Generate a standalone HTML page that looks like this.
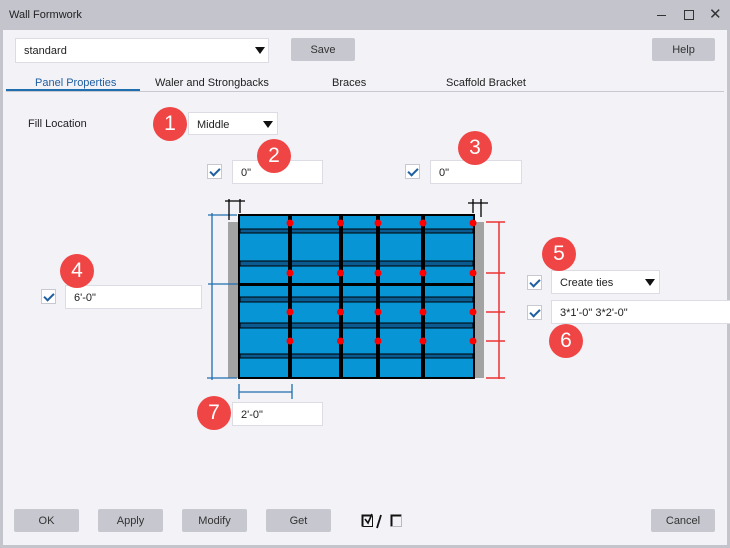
<!DOCTYPE html><html><head><style>
*{box-sizing:border-box;margin:0;padding:0}
body{width:730px;height:548px;background:#f2f2f7;font-family:"Liberation Sans",sans-serif;font-size:11px;color:#222;position:relative;overflow:hidden}
.a{position:absolute}
.inp{position:absolute;background:#fff;border:1px solid #dcdce4;height:24px;padding:6px 8px;font-size:11px}
.btn{position:absolute;background:#c6c7cf;border-radius:2px;height:23px;text-align:center;line-height:25px;font-size:11px;color:#333}
.cb{position:absolute;width:15px;height:15px;border:1px solid #c8c8d0;background:#fff}
.cb:after{content:"";position:absolute;left:4px;top:1px;width:4px;height:8px;border:solid #1f5fa0;border-width:0 2px 2px 0;transform:rotate(45deg)}
.n{position:absolute;width:34px;height:34px;border-radius:50%;background:#f04545;color:#fff;font-size:21px;text-align:center;line-height:34px}
.tab{position:absolute;top:77px;font-size:11px}
.ar{position:absolute;width:0;height:0;border-left:5px solid transparent;border-right:5px solid transparent;border-top:7px solid #111}
</style></head><body>
<div class="a" style="left:0;top:0;width:730px;height:30px;background:#c3c4cc"></div>
<div class="a" style="left:0;top:0;width:730px;height:548px;border:3px solid #c3c4cc;border-top:none"></div>
<div class="a" style="left:9px;top:9px;font-size:11px">Wall Formwork</div>
<div class="a" style="left:657px;top:15px;width:9px;height:1px;background:#333"></div>
<div class="a" style="left:684px;top:10px;width:10px;height:10px;border:1px solid #333"></div>
<div class="a" style="left:709px;top:5px;font-size:15px;color:#333">✕</div>
<div class="inp" style="left:15px;top:38px;width:254px;height:25px">standard</div>
<div class="ar" style="left:255px;top:47px"></div>
<div class="btn" style="left:291px;top:38px;width:64px">Save</div>
<div class="btn" style="left:652px;top:38px;width:63px">Help</div>
<div class="tab" style="left:35px;color:#1f5fa0">Panel Properties</div>
<div class="tab" style="left:155px">Waler and Strongbacks</div>
<div class="tab" style="left:332px">Braces</div>
<div class="tab" style="left:446px">Scaffold Bracket</div>
<div class="a" style="left:6px;top:91px;width:718px;height:1px;background:#c8c8d0"></div>
<div class="a" style="left:6px;top:89px;width:134px;height:2px;background:#1f6fb0"></div>
<div class="a" style="left:28px;top:118px">Fill Location</div>
<div class="inp" style="left:188px;top:112px;width:90px;height:23px">Middle</div>
<div class="ar" style="left:263px;top:121px"></div>
<div class="cb" style="left:207px;top:164px"></div>
<div class="inp" style="left:232px;top:160px;width:91px">0"</div>
<div class="cb" style="left:405px;top:164px"></div>
<div class="inp" style="left:430px;top:160px;width:92px">0"</div>
<div class="cb" style="left:41px;top:289px"></div>
<div class="inp" style="left:65px;top:285px;width:137px">6'-0"</div>
<div class="cb" style="left:527px;top:275px"></div>
<div class="inp" style="left:551px;top:270px;width:109px">Create ties</div>
<div class="ar" style="left:645px;top:279px"></div>
<div class="cb" style="left:527px;top:305px"></div>
<div class="inp" style="left:551px;top:300px;width:180px">3*1'-0" 3*2'-0"</div>
<div class="inp" style="left:232px;top:402px;width:91px">2'-0"</div>
<svg class="a" style="left:0;top:0" width="730" height="548">
<rect x="228" y="222" width="11" height="156" fill="#a3a3a3"/><rect x="474" y="222" width="10" height="156" fill="#a3a3a3"/>
<rect x="239" y="215" width="235" height="163" fill="#0895d6" stroke="#000" stroke-width="2"/>
<g fill="#0b5a90" stroke="#000" stroke-width="1">
<rect x="240" y="229" width="233" height="4"/><rect x="240" y="261" width="233" height="5"/><rect x="240" y="297" width="233" height="5"/><rect x="240" y="323" width="233" height="5"/><rect x="240" y="354" width="233" height="4"/></g>
<rect x="240" y="283" width="233" height="3" fill="#000"/>
<g fill="#000"><rect x="288" y="215" width="4" height="163"/><rect x="339" y="215" width="4" height="163"/><rect x="376" y="215" width="4" height="163"/><rect x="421" y="215" width="4" height="163"/></g>
<g fill="#f00">
<circle cx="290" cy="223" r="3.5"/><circle cx="340.5" cy="223" r="3.5"/><circle cx="378" cy="223" r="3.5"/><circle cx="423" cy="223" r="3.5"/><circle cx="473" cy="223" r="3.5"/>
<circle cx="290" cy="273" r="3.5"/><circle cx="340.5" cy="273" r="3.5"/><circle cx="378" cy="273" r="3.5"/><circle cx="423" cy="273" r="3.5"/><circle cx="473" cy="273" r="3.5"/>
<circle cx="290" cy="312" r="3.5"/><circle cx="340.5" cy="312" r="3.5"/><circle cx="378" cy="312" r="3.5"/><circle cx="423" cy="312" r="3.5"/><circle cx="473" cy="312" r="3.5"/>
<circle cx="290" cy="341" r="3.5"/><circle cx="340.5" cy="341" r="3.5"/><circle cx="378" cy="341" r="3.5"/><circle cx="423" cy="341" r="3.5"/><circle cx="473" cy="341" r="3.5"/>
</g>
<g stroke="#e33" stroke-width="1.5"><line x1="499" y1="222" x2="499" y2="379"/><line x1="486" y1="222" x2="505" y2="222"/><line x1="486" y1="273" x2="505" y2="273"/><line x1="486" y1="312" x2="505" y2="312"/><line x1="486" y1="341" x2="505" y2="341"/><line x1="486" y1="378" x2="505" y2="378"/></g>
<g stroke="#1f6fb0" stroke-width="1.3"><line x1="212" y1="213" x2="212" y2="380"/><line x1="208" y1="215" x2="237" y2="215"/><line x1="208" y1="284" x2="238" y2="284"/><line x1="207" y1="378" x2="237" y2="378"/><line x1="239" y1="392" x2="292" y2="392"/><line x1="239" y1="384" x2="239" y2="399"/><line x1="292" y1="384" x2="292" y2="399"/></g>
<g stroke="#000" stroke-width="1.3"><line x1="225" y1="201" x2="245" y2="201"/><line x1="229" y1="199" x2="229" y2="220"/><line x1="240" y1="199" x2="240" y2="213"/><line x1="468" y1="203" x2="488" y2="203"/><line x1="473" y1="199" x2="473" y2="213"/><line x1="481" y1="199" x2="481" y2="217"/></g>
<g fill="none" stroke="#111">
<path d="M362.5 526.5V515.5H372.5" stroke-width="2"/><path d="M362.5 526.5H372.5V515.5" stroke-width="1"/><path d="M365 519L368 523L372 514" stroke-width="1.6"/>
<path d="M381 515L377 528" stroke-width="1.8"/>
<path d="M391.5 526.5V515.5H401.5" stroke-width="2"/><path d="M391.5 526.5H401.5V515.5" stroke-width="1" stroke="#bbb"/>
</g>
</svg>
<div class="n" style="left:153px;top:107px">1</div>
<div class="n" style="left:257px;top:139px">2</div>
<div class="n" style="left:458px;top:131px">3</div>
<div class="n" style="left:60px;top:254px">4</div>
<div class="n" style="left:542px;top:237px">5</div>
<div class="n" style="left:549px;top:324px">6</div>
<div class="n" style="left:197px;top:396px">7</div>
<div class="btn" style="left:14px;top:509px;width:65px">OK</div>
<div class="btn" style="left:98px;top:509px;width:65px">Apply</div>
<div class="btn" style="left:182px;top:509px;width:65px">Modify</div>
<div class="btn" style="left:266px;top:509px;width:65px">Get</div>
<div class="btn" style="left:651px;top:509px;width:64px">Cancel</div>
</body></html>
